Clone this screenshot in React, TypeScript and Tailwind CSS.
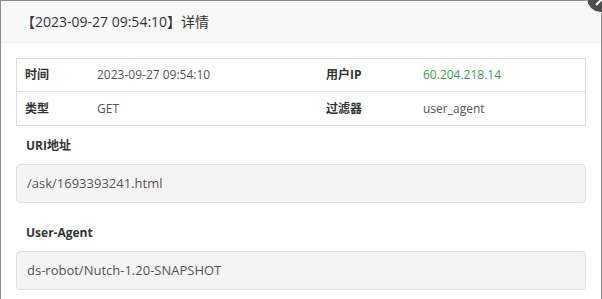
import React from "react";

const font = { fontFamily: '"Open Sans", "Noto Sans CJK SC", sans-serif' };

export default function App() {
  return (
    <div className="relative w-[602px] h-[299px] overflow-hidden bg-white" style={font}>
      <div className="h-[299px] border-l border-t border-r border-[#8c8c8c] bg-white">
        <div className="h-[42px] leading-[42px] bg-[#f8f8f8] border-b border-[#eeeeee] pl-[20px] text-[14px] text-[#333]">
          【2023-09-27 09:54:10】详情
        </div>
        <div className="px-[15px] pt-[15px]">
          <div className="border border-[#dddddd] text-[12px]">
            <div className="flex h-[33px] items-center border-b border-[#dddddd]">
              <div className="w-[70px] pl-[8px] font-bold text-[#333]">时间</div>
              <div className="w-[230px] pl-[10px] text-[#555]">2023-09-27 09:54:10</div>
              <div className="w-[98px] pl-[9px] font-bold text-[#333]">用户IP</div>
              <div className="flex-1 pl-[8px] text-[#3aa14a]">60.204.218.14</div>
            </div>
            <div className="flex h-[33px] items-center">
              <div className="w-[70px] pl-[8px] font-bold text-[#333]">类型</div>
              <div className="w-[230px] pl-[10px] text-[#555]">GET</div>
              <div className="w-[98px] pl-[9px] font-bold text-[#333]">过滤器</div>
              <div className="flex-1 pl-[8px] text-[#555]">user_agent</div>
            </div>
          </div>
          <div className="mt-[10px] h-[20px] leading-[20px] pl-[10px] text-[12px] font-bold text-[#333]">URI地址</div>
          <div className="mt-[8px] h-[39px] flex items-center rounded-[4px] border border-[#e0e0e0] bg-[#f4f4f4] pl-[10px] text-[13px] text-[#555]">
            /ask/1693393241.html
          </div>
          <div className="mt-[20px] h-[20px] leading-[20px] pl-[10px] text-[12px] font-bold text-[#333]">User-Agent</div>
          <div className="mt-[8px] h-[39px] flex items-center rounded-[4px] border border-[#e0e0e0] bg-[#f4f4f4] pl-[10px] text-[13px] text-[#555]">
            ds-robot/Nutch-1.20-SNAPSHOT
          </div>
        </div>
      </div>
      <div className="absolute left-[586px] top-[-17px] w-[30px] h-[30px] rounded-full bg-[#4d4d4d] border border-white">
        <svg className="absolute left-0 top-0" width="30" height="30" viewBox="0 0 30 30">
          <path d="M9 9 L21 21 M21 9 L9 21" stroke="#ffffff" strokeWidth="2" />
        </svg>
      </div>
    </div>
  );
}
